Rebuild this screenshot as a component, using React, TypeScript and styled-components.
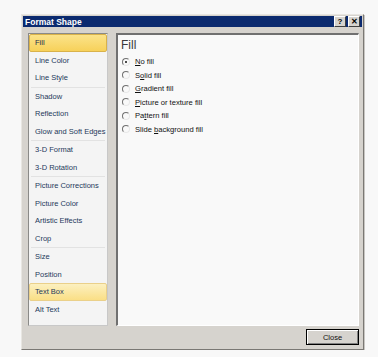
import styled, { createGlobalStyle } from "styled-components";

const Global = createGlobalStyle`
  body {
    margin: 0;
    background: #f8f8f8;
    font-family: "Liberation Sans", Arial, sans-serif;
  }
`;

const Page = styled.div`
  padding: 14px 0 0 21px;
`;

const Window = styled.div`
  width: 343px;
  height: 336px;
  box-sizing: border-box;
  background: #d6d3ce;
  border-top: 1px solid #e8e6e2;
  border-left: 1px solid #e8e6e2;
  border-right: 1px solid #7a7874;
  border-bottom: 1px solid #7a7874;
  box-shadow: 1px 1px 0 #c8c6c2;
  display: flex;
  flex-direction: column;
`;

const TitleBar = styled.div`
  height: 13px;
  margin: 1px 1px 0 1px;
  background: #0b2a6f;
  display: flex;
  align-items: center;
  justify-content: space-between;
  padding: 0 2px 0 2px;
`;

const Title = styled.span`
  color: #fff;
  font-weight: bold;
  font-size: 8.5px;
`;

const TitleButtons = styled.div`
  display: flex;
  gap: 2px;
`;

const TitleButton = styled.div`
  width: 10px;
  height: 9px;
  background: #d6d3ce;
  border-top: 1px solid #fff;
  border-left: 1px solid #fff;
  border-right: 1px solid #404040;
  border-bottom: 1px solid #404040;
  display: flex;
  align-items: center;
  justify-content: center;
  font-size: 8px;
  font-weight: bold;
  color: #000;
  line-height: 1;
`;

const Body = styled.div`
  flex: 1;
  display: flex;
  flex-direction: column;
  padding: 6px 4px 4px 6px;
`;

const Panels = styled.div`
  display: flex;
  gap: 8px;
  height: 293px;
`;

const NavList = styled.div`
  width: 80px;
  box-sizing: border-box;
  background: #f4f4f4;
  border: 1px solid #8a8a88;
  border-right-color: #c8c8c8;
  border-bottom-color: #c8c8c8;
  display: flex;
  flex-direction: column;
`;

const NavItem = styled.div<{ $active?: boolean; $soft?: boolean }>`
  height: 17.5px;
  box-sizing: border-box;
  display: flex;
  align-items: center;
  padding-left: 5px;
  font-size: 7.5px;
  color: #1e395b;
  white-space: nowrap;
  border: 1px solid transparent;
  border-radius: 2px;
  ${(p) =>
    p.$active &&
    `
    background: linear-gradient(#fbe38a, #f7d15a);
    border-color: #d9b24a;
    color: #1b2b4a;
  `}
  ${(p) =>
    p.$soft &&
    `
    background: linear-gradient(#fcf0c0, #fadf86);
    border-color: #ead08a;
  `}
`;

const Separator = styled.div`
  height: 1px;
  margin: 0 2px;
  background: #e2e2e2;
`;

const Content = styled.div`
  flex: 1;
  box-sizing: border-box;
  background: #f9f9f9;
  border-top: 2px solid #707070;
  border-left: 2px solid #707070;
  border-right: 1px solid #ffffff;
  border-bottom: 1px solid #ffffff;
  padding: 3px 0 0 3px;
`;

const Heading = styled.div`
  font-size: 12px;
  color: #3a3a3a;
  margin-bottom: 3px;
`;

const Options = styled.div`
  display: flex;
  flex-direction: column;
`;

const Option = styled.label`
  height: 13.5px;
  display: flex;
  align-items: center;
  gap: 5px;
  font-size: 7.6px;
  color: #111;
  padding-left: 1px;
`;

const Radio = styled.span<{ $checked?: boolean }>`
  width: 6px;
  height: 6px;
  border-radius: 50%;
  border: 1px solid;
  border-color: #707070 #e8e8e8 #e8e8e8 #707070;
  background: #f9f9f9;
  display: flex;
  align-items: center;
  justify-content: center;
  &::after {
    content: "";
    width: 2.5px;
    height: 2.5px;
    border-radius: 50%;
    background: ${(p) => (p.$checked ? "#111" : "transparent")};
  }
`;

const Footer = styled.div`
  display: flex;
  justify-content: flex-end;
  padding-top: 3px;
`;

const CloseButton = styled.button`
  width: 53px;
  height: 16px;
  box-sizing: border-box;
  background: #d6d3ce;
  border: 1px solid #000;
  box-shadow: inset 1px 1px 0 #fff, inset -1px -1px 0 #808080;
  font-family: "Liberation Sans", Arial, sans-serif;
  font-size: 7.5px;
  color: #111;
  padding: 0;
`;

const groups = [
  ["Fill", "Line Color", "Line Style"],
  ["Shadow", "Reflection", "Glow and Soft Edges"],
  ["3-D Format", "3-D Rotation"],
  ["Picture Corrections", "Picture Color", "Artistic Effects", "Crop"],
  ["Size", "Position", "Text Box", "Alt Text"],
];

const options: [string, number][] = [
  ["No fill", 0],
  ["Solid fill", 1],
  ["Gradient fill", 0],
  ["Picture or texture fill", 0],
  ["Pattern fill", 2],
  ["Slide background fill", 6],
];

const Accel = ({ text, at }: { text: string; at: number }) => (
  <span>
    {text.slice(0, at)}
    <u>{text[at]}</u>
    {text.slice(at + 1)}
  </span>
);

export default function App() {
  return (
    <Page>
      <Global />
      <Window>
        <TitleBar>
          <Title>Format Shape</Title>
          <TitleButtons>
            <TitleButton>?</TitleButton>
            <TitleButton>✕</TitleButton>
          </TitleButtons>
        </TitleBar>
        <Body>
          <Panels>
            <NavList>
              {groups.map((g, i) => (
                <div key={i}>
                  {i > 0 && <Separator />}
                  {g.map((name) => (
                    <NavItem key={name} $active={name === "Fill"} $soft={name === "Text Box"}>
                      {name}
                    </NavItem>
                  ))}
                </div>
              ))}
            </NavList>
            <Content>
              <Heading>Fill</Heading>
              <Options>
                {options.map(([label, at], i) => (
                  <Option key={label}>
                    <Radio $checked={i === 0} />
                    <Accel text={label} at={at} />
                  </Option>
                ))}
              </Options>
            </Content>
          </Panels>
          <Footer>
            <CloseButton>Close</CloseButton>
          </Footer>
        </Body>
      </Window>
    </Page>
  );
}
